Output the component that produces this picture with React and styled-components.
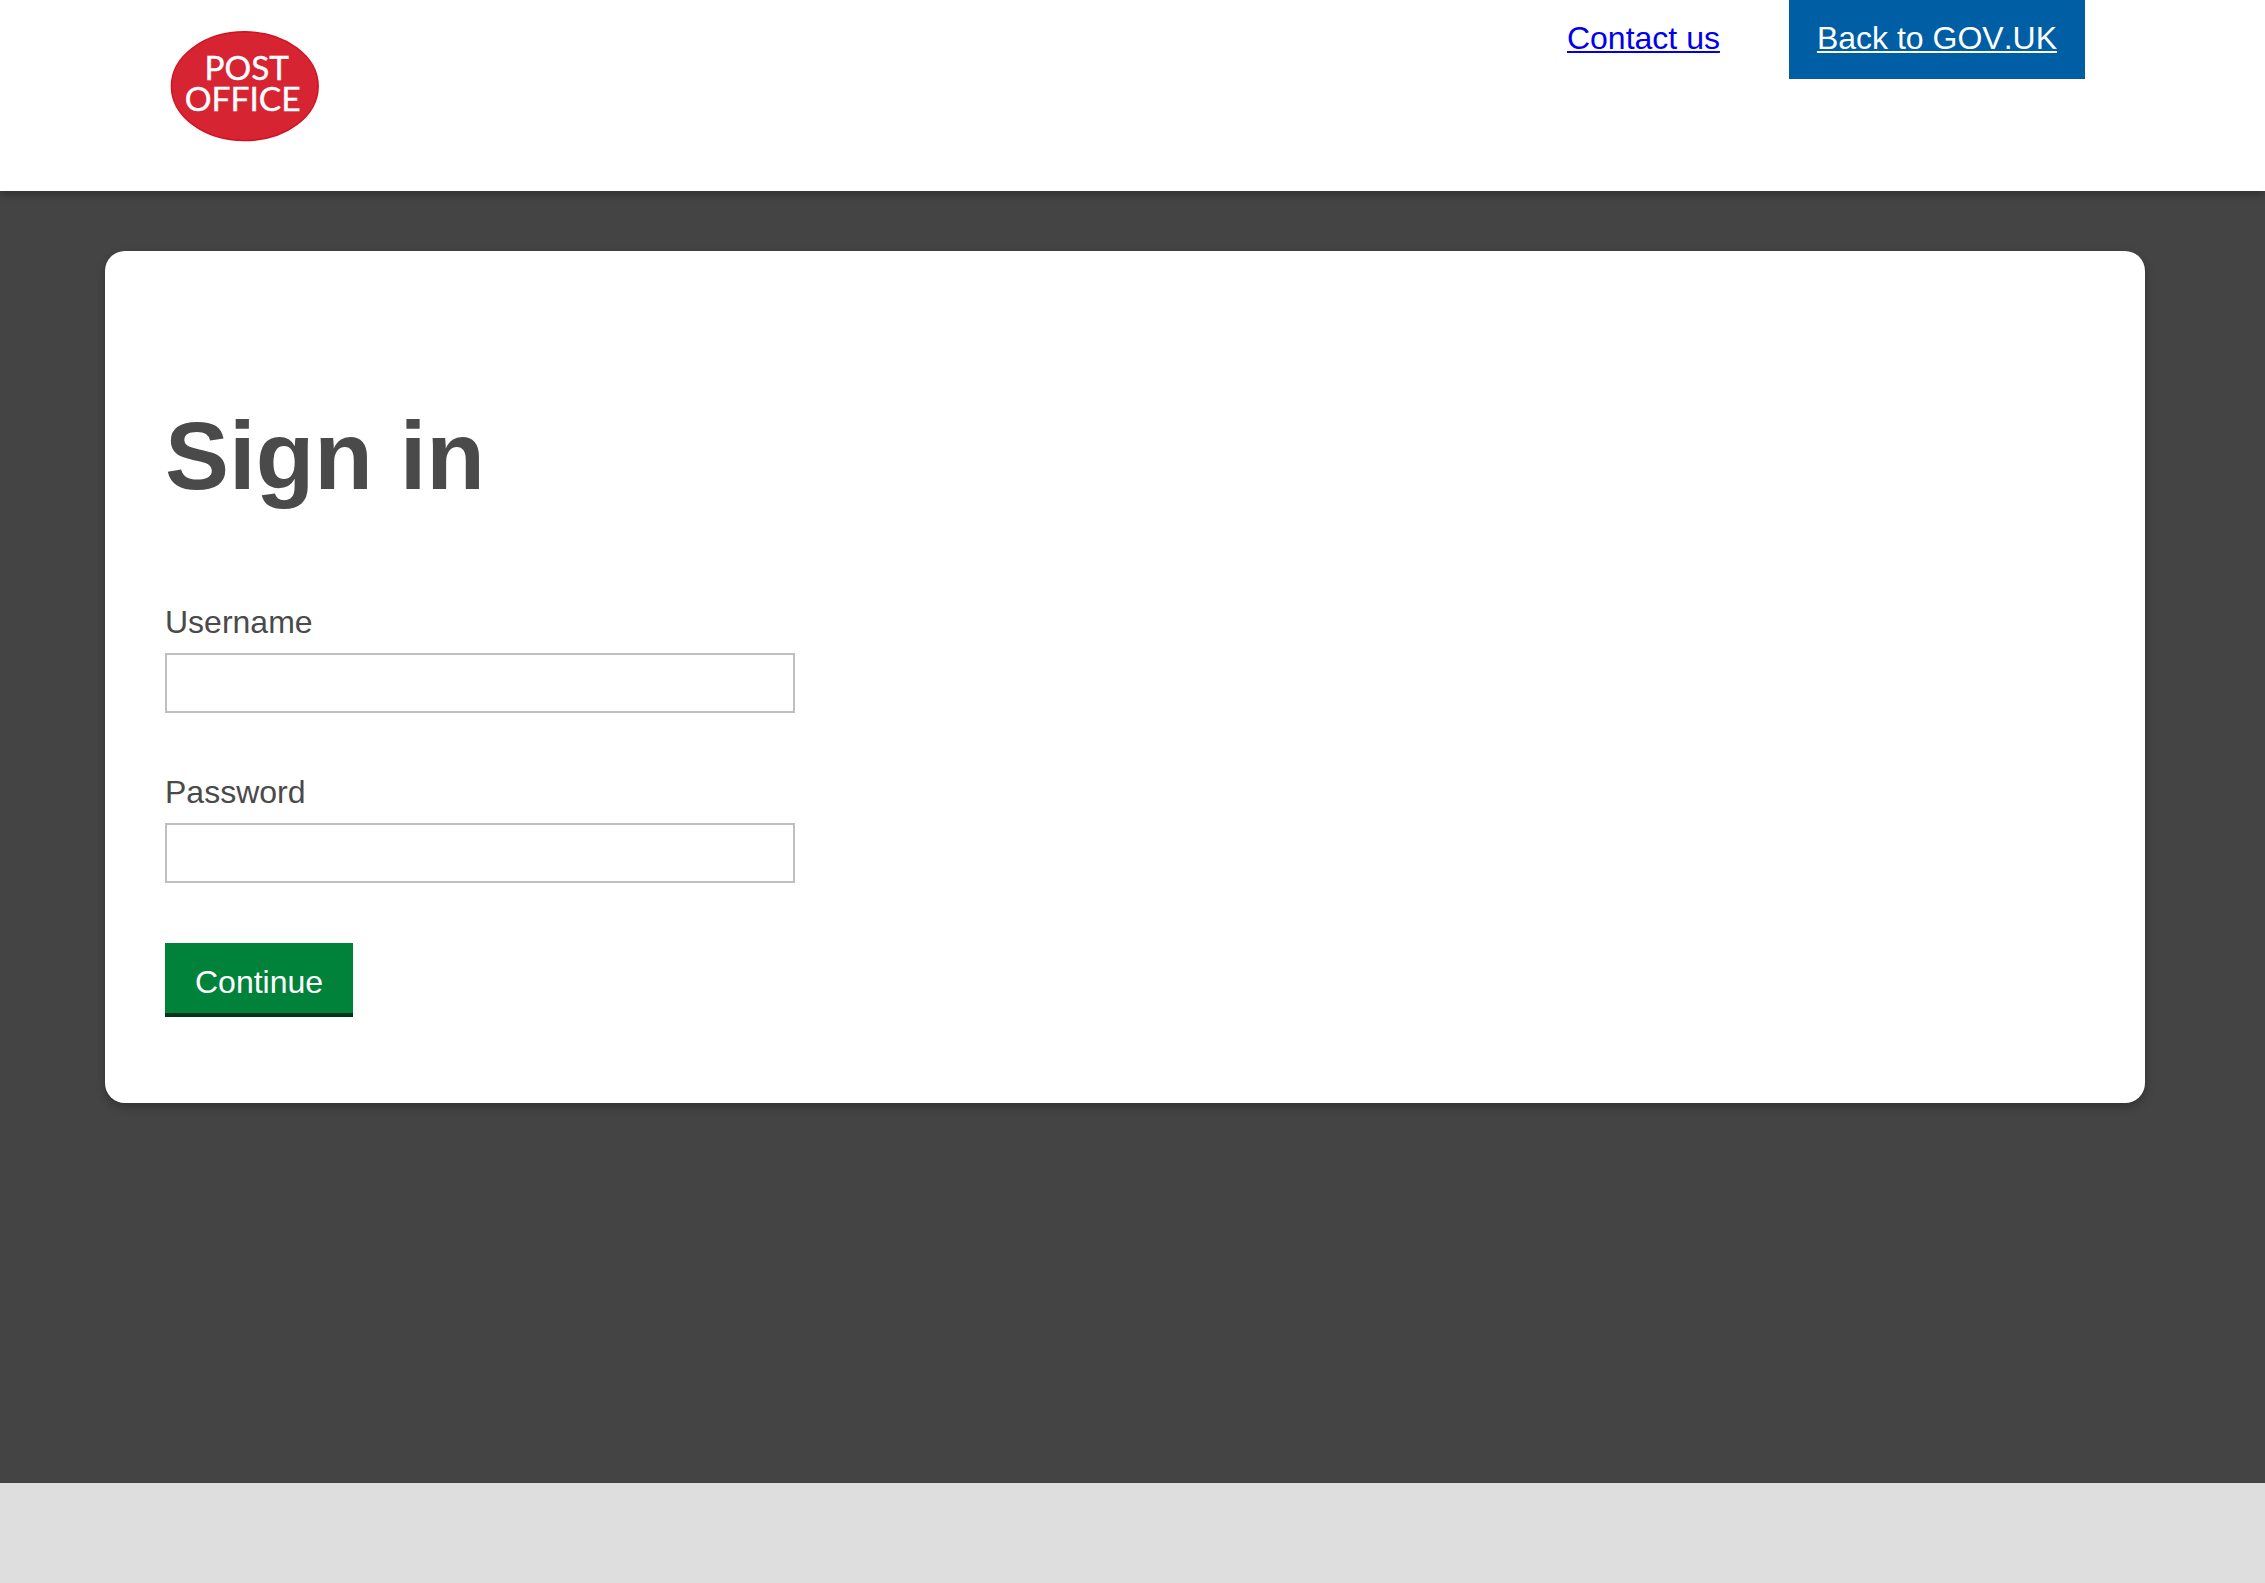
import React from "react";
import styled, { createGlobalStyle } from "styled-components";

const GlobalStyle = createGlobalStyle`
  *, *::before, *::after { box-sizing: border-box; }
  body {
    margin: 0;
    background: #dedede;
    color: #4a4a4a;
    font: 32px/40px "Liberation Sans", Arial, Helvetica, sans-serif;
    font-kerning: none;
  }
`;

const Page = styled.div`
  display: flex;
  flex-direction: column;
  min-height: 100vh;
`;

const Header = styled.header`
  display: flex;
  justify-content: space-between;
  align-items: flex-start;
  height: 191px;
  padding: 0 180px 0 165px;
  background: #fff;
  box-shadow: 0 2px 10px rgba(0, 0, 0, 0.38);
  z-index: 1;
`;

const LogoLink = styled.a`
  display: block;
  margin-top: 26px;
  line-height: 0;
`;

const Nav = styled.nav`
  display: flex;
  gap: 41px;
`;

const NavLink = styled.a`
  height: 79px;
  padding: 18px 28px 0;
  color: ${(p) => (p.$primary ? "#fff" : "#0000ee")};
  background: ${(p) => (p.$primary ? "#005ea5" : "transparent")};
  text-decoration: underline;
  text-decoration-thickness: 2px;
  text-decoration-skip-ink: none;
  text-underline-offset: 2px;
`;

const Main = styled.main`
  height: 1292px;
  padding: 60px 120px 0 105px;
  background: #444;
`;

const Card = styled.section`
  height: 852px;
  padding: 151px 60px 86px;
  border-radius: 20px;
  background: #fff;
  box-shadow: 0 4px 10px rgba(0, 0, 0, 0.27);
`;

const Title = styled.h1`
  margin: 0 0 93px;
  font-size: 96px;
  line-height: 107px;
  font-weight: 700;
`;

const Form = styled.form`
  display: flex;
  flex-direction: column;
  align-items: flex-start;
`;

const Field = styled.label`
  display: flex;
  flex-direction: column;
  gap: 11px;
  width: 630px;
  margin-bottom: ${(p) => p.$gap}px;
`;

const Input = styled.input`
  width: 100%;
  height: 60px;
  padding: 8px;
  border: 2px solid #bfbfbf;
  border-radius: 0;
  background: #fff;
  font: inherit;
  color: inherit;
  outline: none;
`;

const SubmitButton = styled.button`
  padding: 19px 30px 11px;
  border: 0;
  border-bottom: 4px solid #003618;
  border-radius: 0;
  background: #00823b;
  color: #fff;
  font: inherit;
`;

const Footer = styled.footer`
  flex: 1;
  background: #dedede;
`;

const logoText = {
  fontFamily: "Lato, 'Liberation Sans', sans-serif",
  fontSize: 33.5,
  fill: "#fff",
  stroke: "#fff",
  strokeWidth: 0.4,
  lengthAdjust: "spacingAndGlyphs",
};

function Logo() {
  return (
    <svg width="160" height="120" viewBox="0 0 160 120" role="img" aria-label="Post Office">
      <ellipse cx="79.8" cy="60.2" rx="73.4" ry="54.4" fill="#d62433" stroke="#d2101f" strokeWidth="1.4" />
      <text x="39.5" y="54" textLength="84.5" {...logoText}>POST</text>
      <text x="19.8" y="84.6" textLength="115.8" {...logoText}>OFFICE</text>
    </svg>
  );
}

export default function App() {
  return (
    <Page>
      <GlobalStyle />
      <Header>
        <LogoLink><Logo /></LogoLink>
        <Nav>
          <NavLink href="#">Contact us</NavLink>
          <NavLink href="#" $primary>Back to GOV.UK</NavLink>
        </Nav>
      </Header>
      <Main>
        <Card>
          <Title>Sign in</Title>
          <Form>
            <Field $gap={59}>Username<Input type="text" /></Field>
            <Field $gap={60}>Password<Input type="password" /></Field>
            <SubmitButton type="button">Continue</SubmitButton>
          </Form>
        </Card>
      </Main>
      <Footer />
    </Page>
  );
}
